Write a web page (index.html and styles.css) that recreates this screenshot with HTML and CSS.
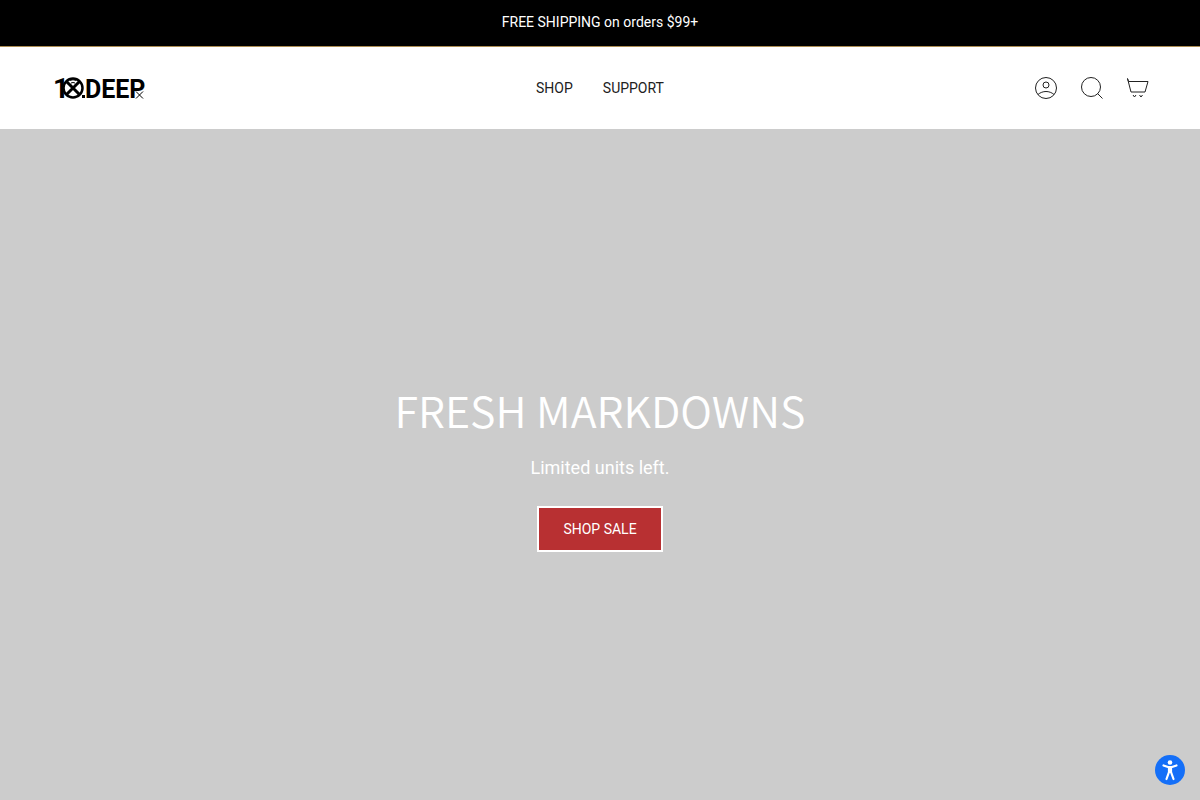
FILE: index.html
```html
<!DOCTYPE html>
<html lang="en">
<head>
  <meta charset="UTF-8">
  <title>10.Deep</title>
  <meta name="viewport" content="width=device-width, initial-scale=1.0">
  <link rel="stylesheet" href="styles.css">
</head>
<body>
  <div class="announcement">FREE SHIPPING on orders $99+</div>

  <header class="header">
    <a class="logo" href="#" aria-label="10.Deep">
      <svg width="92" height="24" viewBox="0 0 92 24">
        <text x="-2" y="22" class="logo-one">1</text>
        <g fill="none" stroke="#000">
          <circle cx="18" cy="12" r="9.500" stroke-width="2.500"/>
          <path d="M11.500 5.500l13 13M24.500 5.500l-13 13" stroke-width="3"/>
          <path d="M14.500 4.500q3.500-1.500 7 0M16 7q2-1 4 0" stroke-width="1"/>
        </g>
        <rect x="27" y="19" width="3" height="3"/>
        <text x="30" y="22" class="logo-text">DEEP</text>
        <path d="M81 15.500l7 7M88 15.500l-7 7" fill="none" stroke="#000"/>
      </svg>
    </a>

    <nav class="nav">
      <a href="#">SHOP</a>
      <a href="#">SUPPORT</a>
    </nav>

    <div class="tools">
      <a href="#" aria-label="Account">
        <svg width="24" height="24" viewBox="0 0 24 24">
          <circle cx="12" cy="12" r="10.500"/>
          <circle cx="12" cy="9" r="3"/>
          <path d="M4 18.500c4.500-4 11.500-4 16 0"/>
        </svg>
      </a>
      <a href="#" aria-label="Search">
        <svg width="24" height="24" viewBox="0 0 24 24">
          <circle cx="11" cy="11" r="9.500"/>
          <path d="M17.500 17.500l5 5"/>
        </svg>
      </a>
      <a href="#" aria-label="Cart">
        <svg width="24" height="24" viewBox="0 0 24 24">
          <path d="M1.500 2.500l1 3h19.500l-3 10.500h-14l-3.500-13.500"/>
          <path d="M7 19l1.500 2 1.500-2M13.500 19l1.500 2 1.500-2"/>
        </svg>
      </a>
    </div>
  </header>

  <main class="hero">
    <h1>FRESH MARKDOWNS</h1>
    <p>Limited units left.</p>
    <a class="btn" href="#">SHOP SALE</a>
  </main>

  <button class="accessibility" type="button" aria-label="Accessibility options">
    <svg width="30" height="30" viewBox="0 0 30 30">
      <circle cx="15" cy="7.500" r="2.300" fill="#fff"/>
      <path d="M8.500 10.500l4.500 1.500h4l4.500-1.500M14 12v5l-2.500 7M16 12v5l2.500 7M15 12v5" fill="none" stroke="#fff" stroke-width="2.200" stroke-linecap="round" stroke-linejoin="round"/>
    </svg>
  </button>
</body>
</html>
```
FILE: styles.css
```css
* {
  box-sizing: border-box;
}
body {
  margin: 0;
  min-height: 100vh;
  display: flex;
  flex-direction: column;
  font-family: Roboto, sans-serif;
  font-size: 14px;
  line-height: 20px;
  background: #fff;
  color: #212121;
}
a {
  color: inherit;
  text-decoration: none;
}
svg {
  display: block;
}
.announcement {
  background: #000;
  color: #fff;
  border-bottom: 1px solid #ab8c52;
  padding: 12px 24px 14px;
  text-align: center;
}
.header {
  display: grid;
  grid-template-columns: 1fr auto 1fr;
  align-items: center;
  padding: 29px 50px;
}
.logo {
  justify-self: start;
  margin-left: 5px;
}
.logo svg {
  overflow: visible;
}
.logo-one {
  font-size: 28px;
  font-weight: 700;
}
.logo-text {
  font-size: 25px;
  font-weight: 700;
}
.nav {
  display: flex;
  gap: 30px;
}
.tools {
  display: flex;
  justify-content: flex-end;
  gap: 22px;
}
.tools svg {
  fill: none;
  stroke: #212121;
  stroke-width: 1;
}
.hero {
  flex: 1;
  display: flex;
  flex-direction: column;
  align-items: center;
  justify-content: center;
  padding: 28px 24px 24px;
  background: #ccc;
  color: #fff;
  text-align: center;
}
.hero h1 {
  margin: 0 0 18px;
  font-family: "Noto Sans CJK SC", sans-serif;
  font-size: 43px;
  font-weight: 350;
  line-height: 54px;
}
.hero p {
  margin: 0 0 24px;
  font-size: 18px;
  line-height: 28px;
}
.btn {
  padding: 11px 24px;
  background: #b83032;
  border: 2px solid #fff;
}
.accessibility {
  position: fixed;
  right: 15px;
  bottom: 15px;
  padding: 0;
  border: 0;
  border-radius: 50%;
  background: #146ff8;
  cursor: pointer;
}
```
